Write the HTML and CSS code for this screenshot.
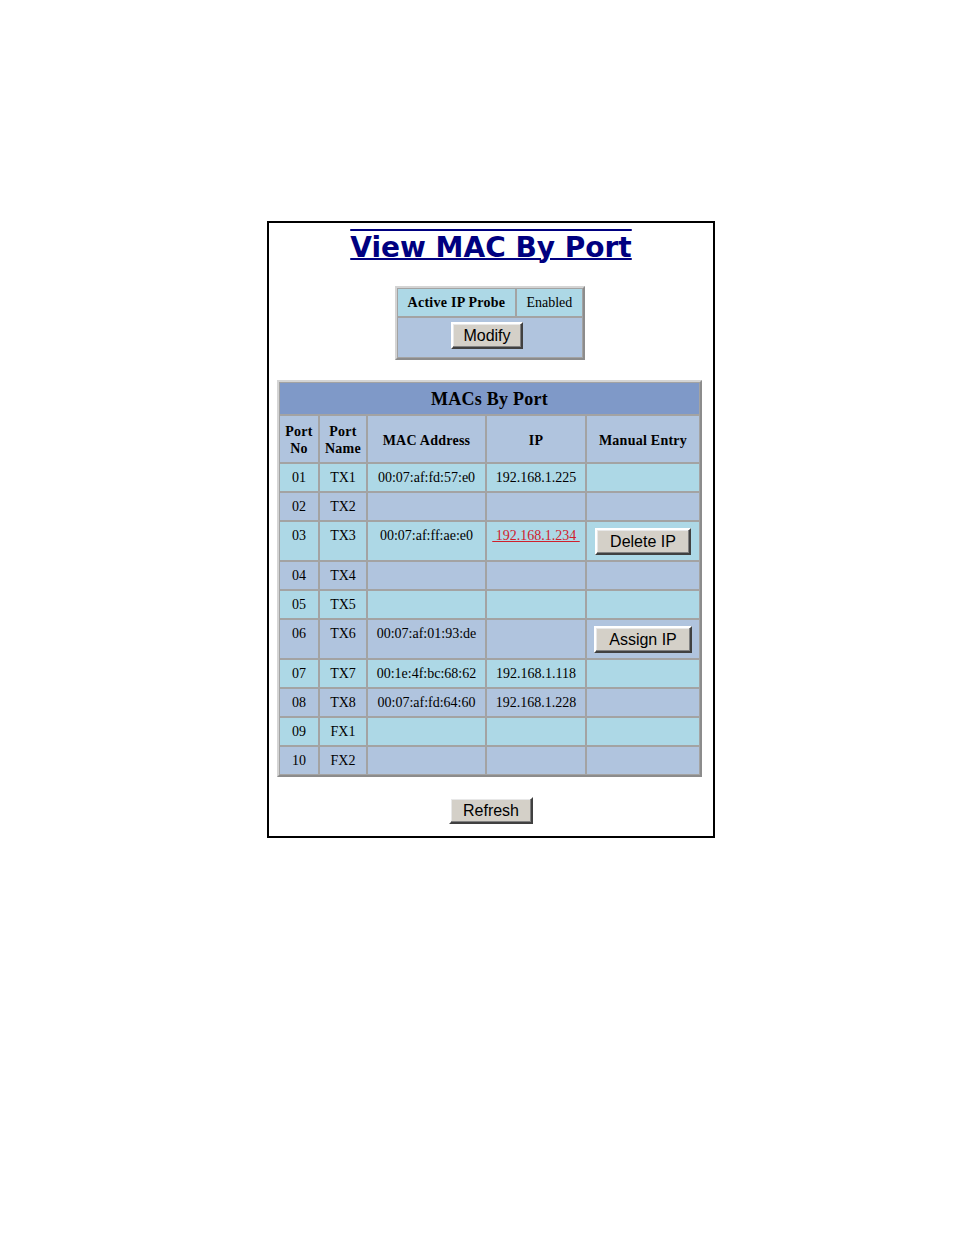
FILE: index.html
```html
<!DOCTYPE html>
<html>
<head>
<meta charset="utf-8">
<link rel="stylesheet" href="styles.css">
</head>
<body>
<div class="frame">
  <h1 class="title">View MAC By Port</h1>

  <table class="probe">
    <tr class="lb">
      <th>Active IP Probe</th>
      <td>Enabled</td>
    </tr>
    <tr class="ls">
      <td colspan="2" class="btncell"><button class="btn btn-modify">Modify</button></td>
    </tr>
  </table>

  <table class="macs">
    <tr class="caption-row">
      <th colspan="5">MACs By Port</th>
    </tr>
    <tr class="ls head">
      <th class="c1">Port<br>No</th>
      <th class="c2">Port<br>Name</th>
      <th class="c3">MAC Address</th>
      <th class="c4">IP</th>
      <th class="c5">Manual Entry</th>
    </tr>
    <tr class="lb"><td>01</td><td>TX1</td><td>00:07:af:fd:57:e0</td><td>192.168.1.225</td><td></td></tr>
    <tr class="ls"><td>02</td><td>TX2</td><td></td><td></td><td></td></tr>
    <tr class="lb"><td>03</td><td>TX3</td><td>00:07:af:ff:ae:e0</td><td><a class="iplink" href="#">&nbsp;192.168.1.234&nbsp;</a></td><td><button class="btn">Delete IP</button></td></tr>
    <tr class="ls"><td>04</td><td>TX4</td><td></td><td></td><td></td></tr>
    <tr class="lb"><td>05</td><td>TX5</td><td></td><td></td><td></td></tr>
    <tr class="ls"><td>06</td><td>TX6</td><td>00:07:af:01:93:de</td><td></td><td><button class="btn">Assign IP</button></td></tr>
    <tr class="lb"><td>07</td><td>TX7</td><td>00:1e:4f:bc:68:62</td><td>192.168.1.118</td><td></td></tr>
    <tr class="ls"><td>08</td><td>TX8</td><td>00:07:af:fd:64:60</td><td>192.168.1.228</td><td></td></tr>
    <tr class="lb"><td>09</td><td>FX1</td><td></td><td></td><td></td></tr>
    <tr class="ls"><td>10</td><td>FX2</td><td></td><td></td><td></td></tr>
  </table>

  <div class="actions"><button class="btn btn-refresh">Refresh</button></div>
</div>
</body>
</html>
```

FILE: styles.css
```css
html, body {
  margin: 0;
  padding: 0;
  background: #fff;
}

.frame {
  margin: 221px 0 0 267px;
  width: 444px;
  border: 2px solid #000;
  display: flex;
  flex-direction: column;
  align-items: center;
  padding-bottom: 12px;
}

.title {
  margin: 7px 0 0 0;
  font-family: "DejaVu Sans", Verdana, sans-serif;
  font-weight: bold;
  font-size: 28px;
  line-height: 36px;
  color: #000080;
  text-decoration: underline overline;
  text-decoration-thickness: 2px;
}

table {
  border-collapse: separate;
  border-spacing: 0;
  font-family: "Liberation Serif", "Times New Roman", serif;
  font-size: 14px;
  line-height: 16px;
  color: #000;
  border: 2px solid;
  border-color: #d4d4d4 #8c8c8c #8c8c8c #d4d4d4;
}

th, td {
  border: 1px solid #a3a3a3;
  text-align: center;
  box-sizing: border-box;
}

th {
  letter-spacing: 0.25px;
}

.lb { background: #add8e6; }
.ls { background: #b0c4de; }

.probe {
  margin-top: 20px;
  margin-right: 3px;
  width: 190px;
}

.probe th, .probe td {
  padding: 6px 8px 5px;
}

.probe th { font-weight: bold; }
.probe td { font-weight: normal; }

.probe .btncell {
  padding: 4px 8px 8px;
}

.macs {
  margin-top: 20px;
  margin-right: 3px;
  width: 425px;
}

.macs td {
  padding: 6px 4px 5px;
  vertical-align: top;
  height: 29px;
}

.caption-row th {
  background: #7f99c8;
  font-size: 18px;
  line-height: 20px;
  padding: 6px 4px 5px;
}

.head th {
  padding: 7px 2px 5px;
  line-height: 17px;
  vertical-align: middle;
}

.c1 { width: 40px; }
.c2 { width: 48px; }
.c3 { width: 119px; }
.c4 { width: 100px; }
.c5 { width: 114px; }

.iplink {
  color: #d0202c;
  text-decoration: underline;
}

.btn {
  font-family: "Liberation Sans", Arial, sans-serif;
  font-size: 16px;
  line-height: 19px;
  height: 27px;
  padding: 0 13px;
  margin: 0;
  background: #d4d0c8;
  color: #000;
  border: 2px solid;
  border-color: #ffffff #404040 #404040 #ffffff;
  box-shadow: inset -1px -1px 0 #808080, inset 1px 1px 0 #e8e8e8;
  vertical-align: top;
}

.btn-modify {
  padding: 0 10px;
  margin-right: 5px;
}

.btn-refresh {
  padding: 0 12px;
}

.actions {
  margin-top: 20px;
  display: flex;
  justify-content: center;
}
```
